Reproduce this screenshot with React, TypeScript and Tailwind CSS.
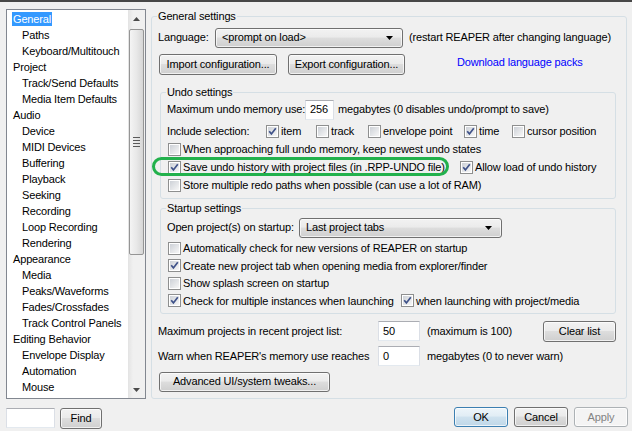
import React from 'react';

type TreeItem = [string, number];

const treeItems: TreeItem[] = [
  ['General', 0],
  ['Paths', 1],
  ['Keyboard/Multitouch', 1],
  ['Project', 0],
  ['Track/Send Defaults', 1],
  ['Media Item Defaults', 1],
  ['Audio', 0],
  ['Device', 1],
  ['MIDI Devices', 1],
  ['Buffering', 1],
  ['Playback', 1],
  ['Seeking', 1],
  ['Recording', 1],
  ['Loop Recording', 1],
  ['Rendering', 1],
  ['Appearance', 0],
  ['Media', 1],
  ['Peaks/Waveforms', 1],
  ['Fades/Crossfades', 1],
  ['Track Control Panels', 1],
  ['Editing Behavior', 0],
  ['Envelope Display', 1],
  ['Automation', 1],
  ['Mouse', 1],
];

const btnBase =
  'flex items-center justify-center rounded-[3px] border shadow-[inset_0_0_0_1px_rgba(255,255,255,0.7)]';
const btnNormal =
  'border-[#707070] bg-[linear-gradient(#f2f2f2,#ebebeb_45%,#dddddd_50%,#cfcfcf)]';

const Button: React.FC<{ children: React.ReactNode; className?: string; kind?: 'normal' | 'default' | 'disabled' }> = ({
  children,
  className = '',
  kind = 'normal',
}) => {
  const look =
    kind === 'default'
      ? 'border-[#3c7fb1] bg-[linear-gradient(#edf5fa,#e1edf5_45%,#cfe2ef_50%,#bfd7e8)] shadow-[inset_0_0_0_1px_rgba(140,215,250,0.8)]'
      : kind === 'disabled'
        ? 'border-[#adb2b5] bg-[#f4f4f4] text-[#838383]'
        : btnNormal;
  return <div className={`${btnBase} ${look} ${className}`}>{children}</div>;
};

const Arrow: React.FC<{ down?: boolean; color?: string }> = ({ down = true, color = '#000' }) => (
  <svg width="7" height="4" viewBox="0 0 7 4">
    {down ? <path d="M0 0 H7 L3.5 4 Z" fill={color} /> : <path d="M0 4 H7 L3.5 0 Z" fill={color} />}
  </svg>
);

const Combo: React.FC<{ text: string; className?: string }> = ({ text, className = '' }) => (
  <div className={`${btnBase} ${btnNormal} justify-between! pl-[6px] pr-[9px] h-[20px] ${className}`}>
    <span>{text}</span>
    <Arrow />
  </div>
);

const Edit: React.FC<{ value: string; className?: string }> = ({ value, className = '' }) => (
  <div
    className={`flex items-center h-[20px] bg-white border border-[#dbdfe6] border-t-[#abadb3] border-b-[#e3e9ef] pl-[4px] ${className}`}
  >
    {value}
  </div>
);

const Check: React.FC<{ checked?: boolean; label: string; className?: string }> = ({
  checked = false,
  label,
  className = '',
}) => (
  <div className={`flex items-center ${className}`}>
    <svg width="13" height="13" viewBox="0 0 13 13" className="shrink-0">
      <defs>
        <linearGradient id="cbg" x1="0" y1="0" x2="1" y2="1">
          <stop offset="0" stopColor="#cdd1d7" />
          <stop offset="1" stopColor="#f7f7f7" />
        </linearGradient>
      </defs>
      <rect x="0.5" y="0.5" width="12" height="12" fill="#fff" stroke="#8e8f8f" />
      <rect x="2" y="2" width="9" height="9" fill="url(#cbg)" />
      {checked && (
        <path d="M3.2 6.3 L5.4 8.9 L9.8 3.2" fill="none" stroke="#3f5289" strokeWidth="1.7" />
      )}
    </svg>
    <span className="ml-[2px] whitespace-nowrap">{label}</span>
  </div>
);

const Tree: React.FC = () => (
  <div className="ml-[6px] w-[140px] h-[390px] border border-[#828790] bg-white flex overflow-hidden">
    <div className="flex-1 pt-px">
      {treeItems.map(([name, level], i) => (
        <div key={name} className={`h-[16px] flex items-center ${level ? 'pl-[14px]' : 'pl-[5px]'}`}>
          <span
            className={`px-px leading-[14px] whitespace-nowrap ${i === 0 ? 'bg-[#3399ff] text-white' : ''}`}
          >
            {name}
          </span>
        </div>
      ))}
    </div>
    <div className="w-[17px] flex flex-col bg-[linear-gradient(90deg,#e3e3e3,#f0f0f0_30%,#f0f0f0)]">
      <div className="h-[17px] flex items-center justify-center">
        <Arrow down={false} color="#4a4a4a" />
      </div>
      <div className="mt-[2px] mx-px h-[226px] rounded-[2px] border border-[#959595] bg-[linear-gradient(90deg,#f4f4f4,#e8e8e8_50%,#d6d6d6)] flex flex-col items-center justify-center gap-[2px]">
        <div className="w-[7px] h-px bg-[#5a5a5a]" />
        <div className="w-[7px] h-px bg-[#5a5a5a]" />
        <div className="w-[7px] h-px bg-[#5a5a5a]" />
        <div className="w-[7px] h-px bg-[#5a5a5a]" />
      </div>
      <div className="flex-1" />
      <div className="h-[17px] flex items-center justify-center">
        <Arrow color="#4a4a4a" />
      </div>
    </div>
  </div>
);

export default function App() {
  return (
    <div className="w-[632px] h-[431px] bg-[#f0f0f0] border-t-2 border-[#474747] flex flex-col text-[11px] text-black tracking-[-0.15px] font-['Liberation_Sans',Arial,sans-serif] overflow-hidden">
      <div className="flex pt-[7px]">
        <Tree />

        <fieldset className="ml-[5px] mt-px w-[476px] border border-[#d5dfe5] rounded-[3px] pl-[6px] pr-[10px] pb-[5px]">
          <legend className="-ml-px px-px leading-[13px]">General settings</legend>

          <div className="mt-[4px] h-[21px] flex items-center">
            <span className="w-[57px]">Language:</span>
            <Combo text="<prompt on load>" className="w-[188px]" />
            <span className="ml-[6px] whitespace-nowrap">(restart REAPER after changing language)</span>
          </div>

          <div className="mt-[6px] h-[21px] flex items-center">
            <Button className="ml-px w-[118px] h-[21px]">Import configuration...</Button>
            <Button className="ml-[11px] w-[117px] h-[21px]">Export configuration...</Button>
            <span className="ml-[52px] mb-[5px] text-[#0000ff] whitespace-nowrap">Download language packs</span>
          </div>

          <fieldset className="mt-[11px] ml-[2px] border border-[#d5dfe5] rounded-[3px] pl-[6px] pb-[4px]">
            <legend className="-ml-px px-px leading-[13px]">Undo settings</legend>
            <div className="h-[21px] flex items-center">
              <span className="w-[138px] whitespace-nowrap">Maximum undo memory use:</span>
              <Edit value="256" className="w-[29px]" />
              <span className="ml-[4px] whitespace-nowrap">megabytes (0 disables undo/prompt to save)</span>
            </div>
            <div className="mt-[2px] h-[18px] flex items-center">
              <span className="w-[99px] whitespace-nowrap">Include selection:</span>
              <Check checked label="item" className="w-[50px]" />
              <Check label="track" className="w-[52px]" />
              <Check label="envelope point" className="w-[96px]" />
              <Check checked label="time" className="w-[48px]" />
              <Check label="cursor position" />
            </div>
            <div className="h-[18px] flex items-center pl-px">
              <Check label="When approaching full undo memory, keep newest undo states" />
            </div>
            <div className="relative h-[18px] flex items-center pl-px">
              <Check checked label="Save undo history with project files (in .RPP-UNDO file)" className="w-[292px]" />
              <Check checked label="Allow load of undo history" />
              <div className="absolute left-[-15px] top-[-1px] w-[297px] h-[19px] border-[3px] border-[#22b14c] rounded-full pointer-events-none" />
            </div>
            <div className="h-[18px] flex items-center pl-px">
              <Check label="Store multiple redo paths when possible (can use a lot of RAM)" />
            </div>
          </fieldset>

          <fieldset className="mt-[3px] ml-[2px] border border-[#d5dfe5] rounded-[3px] pl-[6px] pb-[3px]">
            <legend className="-ml-px px-px leading-[13px]">Startup settings</legend>
            <div className="mt-[2px] h-[21px] flex items-center">
              <span className="w-[132px] whitespace-nowrap">Open project(s) on startup:</span>
              <Combo text="Last project tabs" className="w-[203px]" />
            </div>
            <div className="mt-[1.5px] h-[17.5px] flex items-center pl-px">
              <Check label="Automatically check for new versions of REAPER on startup" />
            </div>
            <div className="h-[17.5px] flex items-center pl-px">
              <Check checked label="Create new project tab when opening media from explorer/finder" />
            </div>
            <div className="h-[17.5px] flex items-center pl-px">
              <Check label="Show splash screen on startup" />
            </div>
            <div className="h-[17.5px] flex items-center pl-px">
              <Check checked label="Check for multiple instances when launching" className="w-[233px]" />
              <Check checked label="when launching with project/media" />
            </div>
          </fieldset>

          <div className="mt-[7px] h-[21px] flex items-center">
            <span className="w-[220px] whitespace-nowrap">Maximum projects in recent project list:</span>
            <Edit value="50" className="w-[42px]" />
            <span className="ml-[7px] whitespace-nowrap">(maximum is 100)</span>
            <Button className="ml-auto w-[73px] h-[21px]">Clear list</Button>
          </div>

          <div className="mt-[4px] h-[21px] flex items-center">
            <span className="w-[220px] whitespace-nowrap">Warn when REAPER's memory use reaches</span>
            <Edit value="0" className="w-[42px]" />
            <span className="ml-[7px] whitespace-nowrap">megabytes (0 to never warn)</span>
          </div>

          <Button className="mt-[5px] ml-px w-[171px] h-[20px]">Advanced UI/system tweaks...</Button>
        </fieldset>
      </div>

      <div className="mt-[8px] flex items-start">
        <div className="ml-[6px] mt-px w-[49px] h-[20px] bg-white border border-[#dbdfe6] border-t-[#abadb3] border-b-[#e3e9ef]" />
        <Button className="ml-[5px] mt-px w-[42px] h-[21px]">Find</Button>
        <div className="ml-auto mr-[4px] flex gap-[6px]">
          <Button kind="default" className="w-[54px] h-[20px]">OK</Button>
          <Button className="w-[54px] h-[20px]">Cancel</Button>
          <Button kind="disabled" className="w-[54px] h-[20px]">Apply</Button>
        </div>
      </div>
    </div>
  );
}
